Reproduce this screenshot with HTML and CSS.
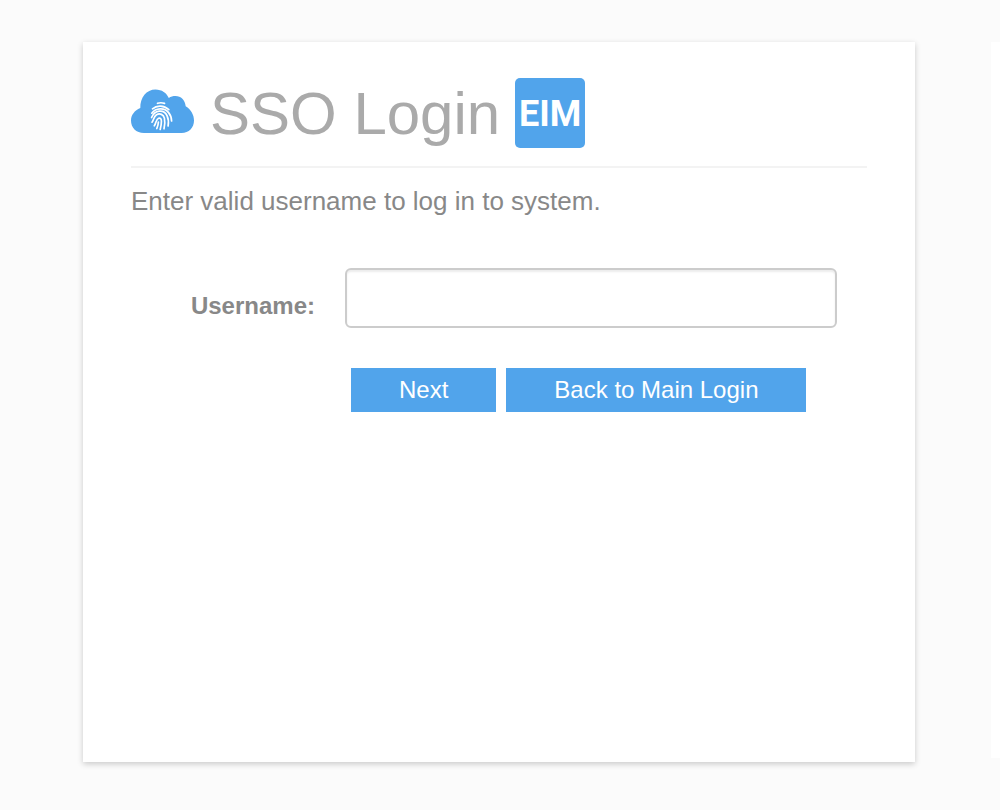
FILE: index.html
```html
<!DOCTYPE html>
<html lang="en">
<head>
<meta charset="utf-8">
<title>SSO Login</title>
<link rel="stylesheet" href="styles.css">
</head>
<body>
<div class="page">
  <main class="card">
    <header class="header">
      <svg class="cloud" viewBox="0 0 63 48" aria-hidden="true">
        <path class="cloud-shape" d="M13 44C5 44 0 38.500 0 31.500c0-5.500 3.500-10 9.300-12.500C9 8.500 15.500.5 24.500.5c6.500 0 11 3.500 13.300 8.500 2-1.400 4.200-2 6.700-2 5.500 0 9.500 4 10.200 10.300C60 20.500 63 26 63 31.500c0 7-5 12.500-12.500 12.500z"/>
        <g class="ridges">
          <path d="M26.500 14.300c2.600-.9 4.800-.7 7 .1"/>
          <path d="M21.500 19.800c4.500-4 11.500-3.600 16.300.8"/>
          <path d="M20.800 24.200c4-5.200 12.500-6 16.800-.6 2.200 2.700 3 5.600 3 8.400"/>
          <path d="M20.600 28.500c3-7.500 12.200-8.800 15.400-1.900 1.400 3 1.700 7 1.100 10.400"/>
          <path d="M21 33.200c1.700-2 1.700-5.600 4.500-7.400 3.300-1.900 7.100-.3 7.900 3.300.7 3.400.5 7.200-.4 10.700"/>
          <path d="M23.300 36.800c2-2.700 1.700-6.800 4.300-7.600 2-.5 2.800 1.200 2.800 3.200 0 3-.5 5.500-1.200 8.100"/>
          <path d="M27.400 33c-.1 2.400-.7 4.500-1.600 6.500"/>
        </g>
      </svg>
      <h1 class="title">SSO Login</h1>
      <span class="badge">EIM</span>
    </header>
    <p class="intro">Enter valid username to log in to system.</p>
    <form class="form">
      <label class="label" for="username">Username:</label>
      <input class="input" id="username" name="username" type="text">
      <div class="actions">
        <button class="button" type="submit">Next</button>
        <button class="button" type="button">Back to Main Login</button>
      </div>
    </form>
  </main>
  <aside class="side"></aside>
</div>
</body>
</html>
```
FILE: styles.css
```css
* {
  box-sizing: border-box;
}

body {
  margin: 0;
  background: #fbfbfb;
  color: #888;
  font-family: "Liberation Sans", Arial, sans-serif;
}

.page {
  display: flex;
  gap: 76px;
  min-height: 100vh;
  padding: 42px 0 48px 83px;
}

.card {
  flex: 1;
  padding: 32px 48px;
  background: #fff;
  box-shadow: 0 2px 6px rgba(0, 0, 0, 0.2);
}

.side {
  width: 9px;
  margin-bottom: 4px;
  background: #fff;
}

.header {
  display: flex;
  align-items: center;
  height: 94px;
  padding-bottom: 14px;
  border-bottom: 2px solid #f3f3f3;
}

.cloud {
  width: 63px;
  height: 48px;
}

.cloud-shape {
  fill: #51a4eb;
}

.ridges {
  fill: none;
  stroke: #fff;
  stroke-width: 1.700;
  stroke-linecap: round;
}

.title {
  margin: 0 15px 0 16px;
  padding-top: 2px;
  color: #aaa;
  font-size: 60px;
  font-weight: 400;
  line-height: 72px;
}

.badge {
  width: 70px;
  height: 70px;
  border-radius: 5px;
  background: #51a4eb;
  color: #fff;
  font-family: Roboto, sans-serif;
  font-size: 36px;
  font-weight: 700;
  line-height: 72px;
  text-align: center;
}

.intro {
  margin: 18px 0 0;
  font-size: 26px;
  line-height: 30px;
}

.form {
  display: grid;
  grid-template-columns: 184px 1fr;
  column-gap: 30px;
  row-gap: 40px;
  align-items: center;
  margin: 52px 30px 0 0;
}

.label {
  padding-top: 16px;
  font-size: 24px;
  font-weight: 700;
  line-height: 28px;
  text-align: right;
}

.input {
  width: 100%;
  height: 60px;
  padding: 8px 12px;
  border: 2px solid #ccc;
  border-radius: 6px;
  background: #fff;
  box-shadow: inset 0 2px 2px rgba(0, 0, 0, 0.08);
  color: #555;
  font: inherit;
  font-size: 24px;
}

.actions {
  display: flex;
  grid-column: 2;
  gap: 10px;
  padding-left: 6px;
}

.button {
  height: 44px;
  padding: 0 48px;
  border: 0;
  background: #51a4eb;
  color: #fff;
  font: inherit;
  font-size: 24px;
  line-height: 44px;
  white-space: nowrap;
}
```
